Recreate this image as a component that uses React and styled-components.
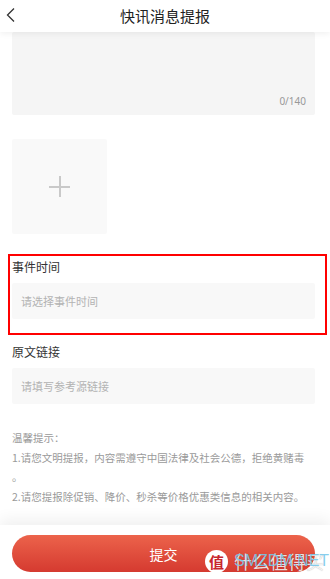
import React from 'react';
import styled, { createGlobalStyle } from 'styled-components';

const GlobalStyle = createGlobalStyle`
  html, body {
    margin: 0;
    padding: 0;
    background: #fff;
  }
  body {
    font-family: "Noto Sans CJK SC", "Noto Sans", sans-serif;
  }
`;

const App = () => {
  return (
    <Page>
      <GlobalStyle />
      <Header>
        <BackButton>
          <svg width="10" height="16" viewBox="0 0 10 16">
            <polyline points="8,1.5 1.5,8 8,14.5" fill="none" stroke="#333" strokeWidth="1.3" />
          </svg>
        </BackButton>
        <Title>快讯消息提报</Title>
      </Header>

      <Content>
        <TextArea>
          <Counter>0/140</Counter>
        </TextArea>

        <Upload>
          <Plus />
        </Upload>

        <Highlight>
          <Field>
            <Label>事件时间</Label>
            <Input>请选择事件时间</Input>
          </Field>
        </Highlight>

        <Field>
          <Label>原文链接</Label>
          <Input>请填写参考源链接</Input>
        </Field>

        <Tips>
          <p>温馨提示：</p>
          <p>1.请您文明提报，内容需遵守中国法律及社会公德，拒绝黄赌毒。</p>
          <p>2.请您提报除促销、降价、秒杀等价格优惠类信息的相关内容。</p>
        </Tips>
      </Content>

      <Footer>
        <SubmitButton>提交</SubmitButton>
        <Watermark>
          <WmBadge>值</WmBadge>
          <WmText>
            <WmCn>什么值得买</WmCn>
            <WmEn>SMZDM.NET</WmEn>
          </WmText>
        </Watermark>
      </Footer>
    </Page>
  );
};

export default App;

// Styled Components
const Page = styled.div`
  width: 330px;
  height: 579px;
  display: flex;
  flex-direction: column;
  overflow: hidden;
  background: #fff;
  position: relative;
`;

const Header = styled.div`
  height: 32px;
  flex-shrink: 0;
  display: flex;
  align-items: center;
  justify-content: center;
  position: relative;
  z-index: 2;
  background: #fff;
  box-shadow: 0 2px 6px rgba(0, 0, 0, 0.06);
`;

const BackButton = styled.div`
  position: absolute;
  left: 6px;
  top: 7px;
  width: 10px;
  height: 16px;
  display: flex;
`;

const Title = styled.h1`
  margin: 0;
  font-size: 15px;
  font-weight: 400;
  color: #222;
  line-height: 32px;
`;

const Content = styled.div`
  flex: 1;
  padding: 0 15px 0 12px;
  overflow: hidden;
`;

const TextArea = styled.div`
  height: 83px;
  background: #f5f5f5;
  border-radius: 2px;
  display: flex;
  align-items: flex-end;
  justify-content: flex-end;
  padding: 0 9px 8px 0;
  box-sizing: border-box;
`;

const Counter = styled.span`
  font-size: 10px;
  color: #999;
  line-height: 12px;
  font-family: "Noto Sans", sans-serif;
`;

const Upload = styled.div`
  width: 95px;
  height: 95px;
  margin-top: 24px;
  background: #f9f9f9;
  border-radius: 2px;
  display: flex;
  align-items: center;
  justify-content: center;
`;

const Plus = styled.div`
  width: 21px;
  height: 21px;
  position: relative;

  &::before,
  &::after {
    content: '';
    position: absolute;
    background: #c9c9c9;
  }
  &::before {
    left: 0;
    right: 0;
    top: 10px;
    height: 2px;
  }
  &::after {
    top: 0;
    bottom: 0;
    left: 10px;
    width: 2px;
  }
`;

const Highlight = styled.div`
  margin: 20px -12px 0 -4px;
  border: 2px solid #ff0000;
  padding: 3px 10px 14px 2px;
`;

const Field = styled.div`
  display: flex;
  flex-direction: column;
  gap: 8px;
  margin-top: 9px;

  ${Highlight} & {
    margin-top: 0;
  }
`;

const Label = styled.div`
  font-size: 12px;
  line-height: 16px;
  color: #333;
`;

const Input = styled.div`
  height: 36px;
  background: #f8f8f8;
  border-radius: 2px;
  padding-left: 9px;
  display: flex;
  align-items: center;
  font-size: 11px;
  color: #b3b3b3;
`;

const Tips = styled.div`
  margin-top: 24px;
  width: 296px;
  font-size: 10.5px;
  line-height: 19.5px;
  color: #9a9a9a;
  line-break: anywhere;

  p {
    margin: 0;
  }
`;

const Footer = styled.div`
  height: 54px;
  flex-shrink: 0;
  padding: 10px 15px 0 12px;
  box-sizing: border-box;
  background: #fff;
  position: relative;
  box-shadow: 0 -6px 14px rgba(0, 0, 0, 0.06);
`;

const SubmitButton = styled.div`
  height: 37px;
  border-radius: 19px;
  background: linear-gradient(180deg, #ec634b 0%, #d53a30 100%);
  color: #fff;
  font-size: 14px;
  display: flex;
  align-items: center;
  justify-content: center;
`;

const Watermark = styled.div`
  position: absolute;
  left: 205px;
  top: 24px;
  display: flex;
  align-items: center;
  gap: 6px;
  pointer-events: none;
`;

const WmBadge = styled.div`
  width: 23px;
  height: 23px;
  border-radius: 50%;
  background: #fff;
  color: #c8262c;
  font-size: 15px;
  font-weight: 700;
  display: flex;
  align-items: center;
  justify-content: center;
  line-height: 1;
`;

const WmText = styled.div`
  position: relative;
  width: 92px;
  height: 24px;
`;

const WmCn = styled.span`
  position: absolute;
  left: 0;
  top: 0;
  font-size: 18px;
  line-height: 24px;
  color: rgba(255, 255, 255, 0.85);
  text-shadow: 0 0 1px rgba(0, 0, 0, 0.35);
  white-space: nowrap;
`;

const WmEn = styled.span`
  position: absolute;
  left: 0;
  top: 2px;
  font-family: "Liberation Sans", Arial, sans-serif;
  font-size: 16px;
  line-height: 20px;
  color: rgba(120, 200, 235, 0.9);
  white-space: nowrap;
`;
